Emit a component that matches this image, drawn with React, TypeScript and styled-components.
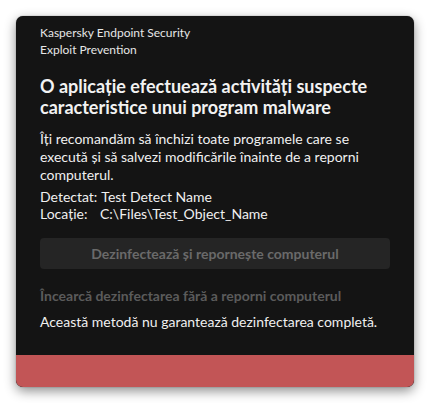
import styled, { createGlobalStyle } from "styled-components";

const GlobalStyle = createGlobalStyle`
  html, body {
    margin: 0;
    padding: 0;
    background: #ffffff;
  }
  body {
    font-family: Lato, "Liberation Sans", sans-serif;
  }
`;

const Page = styled.div`
  padding: 16px;
  width: 430px;
  box-sizing: border-box;
`;

const Card = styled.div`
  width: 398px;
  background: #141414;
  border-radius: 7px;
  overflow: hidden;
  box-shadow: 0 4px 12px rgba(0, 0, 0, 0.45), 0 0 1px rgba(0, 0, 0, 0.6);
  display: flex;
  flex-direction: column;
`;

const Content = styled.div`
  padding: 8px 24px 24px 24px;
  display: flex;
  flex-direction: column;
  color: #ffffff;
`;

const AppName = styled.div`
  font-size: 12px;
  line-height: 17px;
  color: #e6e6e6;
`;

const Title = styled.h1`
  margin: 18px 0 0 0;
  font-size: 18px;
  line-height: 21px;
  font-weight: 700;
  color: #f2f2f2;
`;

const Paragraph = styled.p<{ $gap?: number }>`
  margin: ${(p) => p.$gap ?? 0}px 0 0 0;
  font-size: 14px;
  line-height: 18px;
  color: #f0f0f0;
`;

const InfoList = styled.div`
  margin-top: 4px;
  display: flex;
  flex-direction: column;
`;

const InfoRow = styled.div`
  display: flex;
  font-size: 14px;
  line-height: 17px;
  color: #f0f0f0;
`;

const InfoLabel = styled.span<{ $width?: number }>`
  display: inline-block;
  min-width: ${(p) => p.$width ?? 0}px;
  padding-right: 4px;
`;

const ActionButton = styled.button`
  margin-top: 16px;
  height: 31px;
  border: none;
  border-radius: 4px;
  background: #252525;
  color: #6a6a6a;
  font-family: inherit;
  font-size: 14px;
  font-weight: 700;
  cursor: default;
`;

const LinkAction = styled.div`
  margin-top: 18px;
  font-size: 14px;
  line-height: 18px;
  font-weight: 700;
  color: #5b5b5b;
`;

const Footer = styled.div`
  height: 32px;
  background: #c25556;
`;

export default function App() {
  return (
    <>
      <GlobalStyle />
      <Page>
        <Card>
          <Content>
            <AppName>Kaspersky Endpoint Security</AppName>
            <AppName>Exploit Prevention</AppName>
            <Title>
              O aplicație efectuează activități suspecte caracteristice unui
              program malware
            </Title>
            <Paragraph $gap={12}>
              Îți recomandăm să închizi toate programele care se execută și să
              salvezi modificările înainte de a reporni computerul.
            </Paragraph>
            <InfoList>
              <InfoRow>
                <InfoLabel>Detectat:</InfoLabel>
                <span>Test Detect Name</span>
              </InfoRow>
              <InfoRow>
                <InfoLabel $width={56}>Locație:</InfoLabel>
                <span>C:\Files\Test_Object_Name</span>
              </InfoRow>
            </InfoList>
            <ActionButton>Dezinfectează și repornește computerul</ActionButton>
            <LinkAction>Încearcă dezinfectarea fără a reporni computerul</LinkAction>
            <Paragraph $gap={8}>
              Această metodă nu garantează dezinfectarea completă.
            </Paragraph>
          </Content>
          <Footer />
        </Card>
      </Page>
    </>
  );
}
